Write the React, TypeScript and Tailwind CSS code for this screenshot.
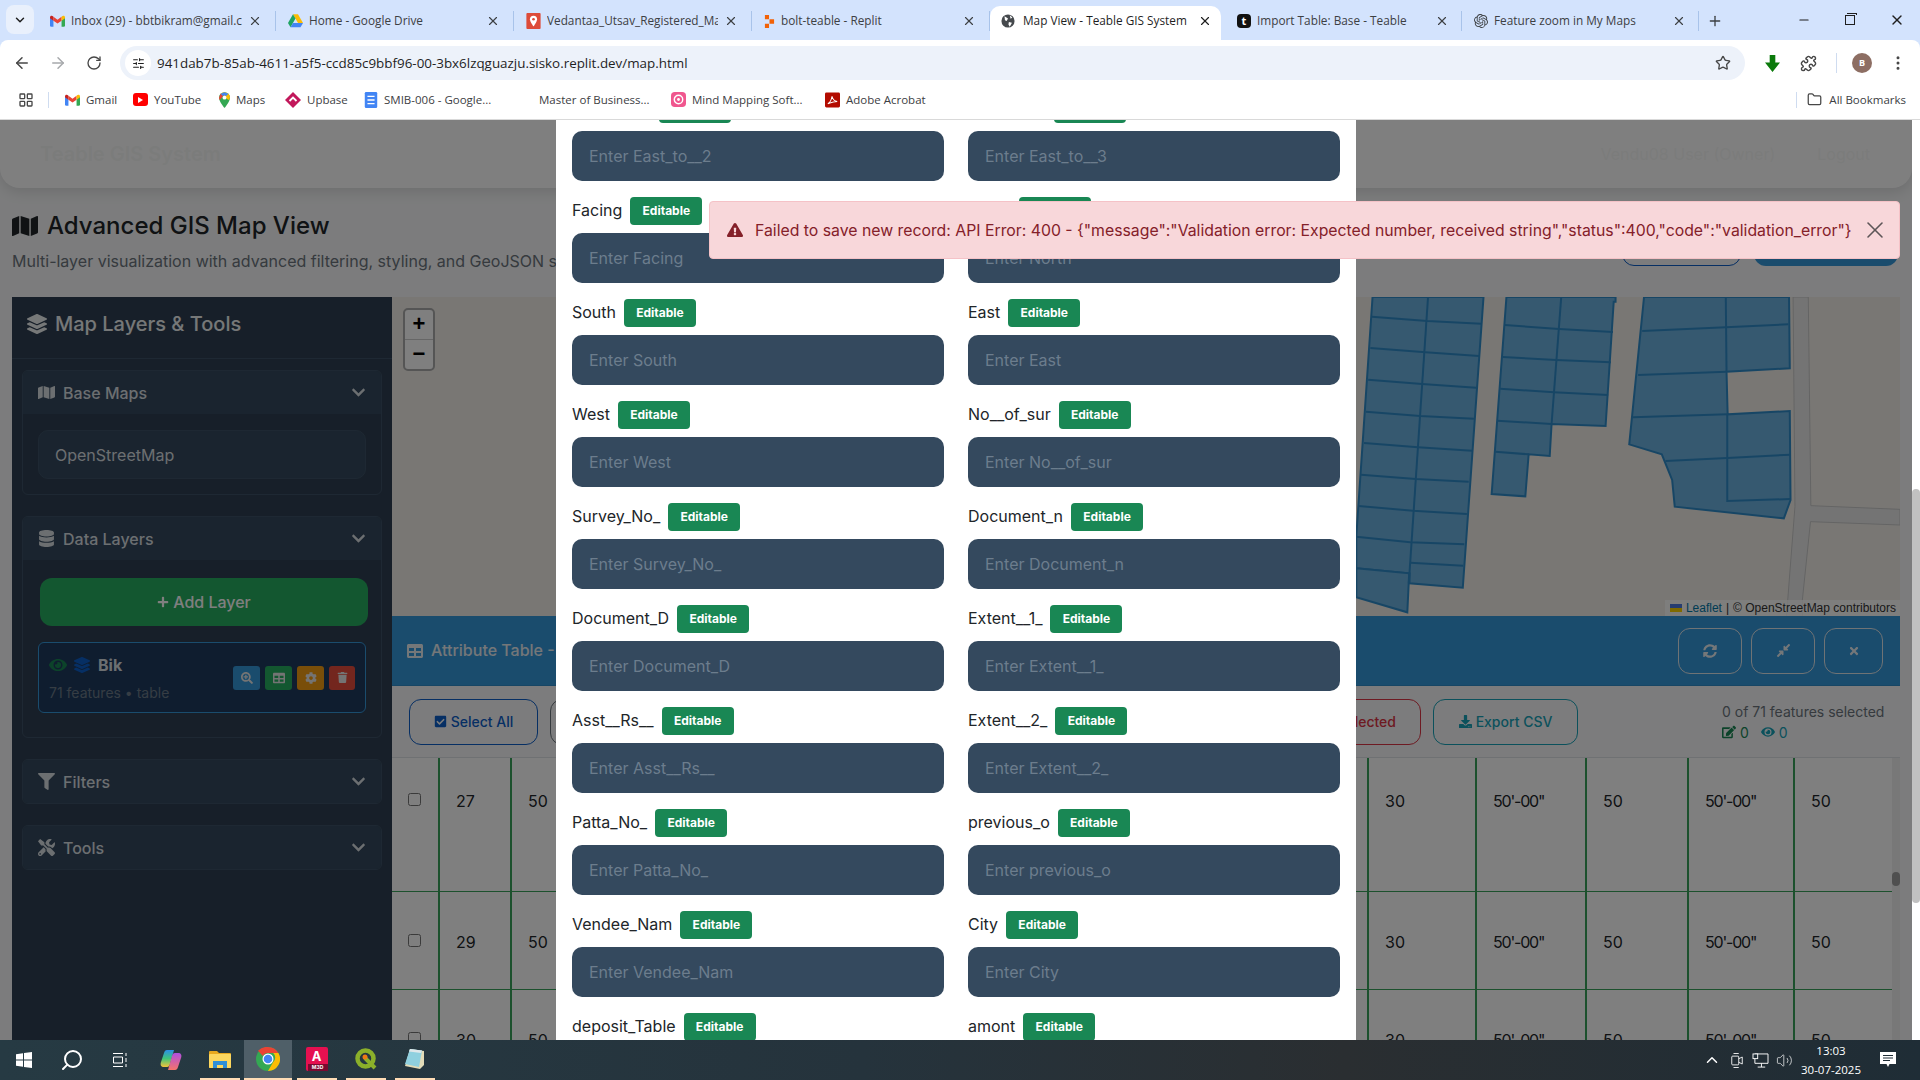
import { type ReactElement, type ReactNode } from 'react';
import {
  FaCheckSquare,
  FaChevronDown,
  FaCog,
  FaCompressAlt,
  FaDatabase,
  FaDownload,
  FaEdit,
  FaExclamationTriangle,
  FaEye,
  FaFilter,
  FaLayerGroup,
  FaMap,
  FaPlus,
  FaSearchPlus,
  FaSyncAlt,
  FaTable,
  FaTimes,
  FaTools,
  FaTrash,
} from 'react-icons/fa';
import { SiOpenai } from 'react-icons/si';
import {
  ArrowLeft,
  ArrowRight,
  ChevronDown,
  ChevronUp,
  EllipsisVertical,
  Folder,
  LayoutGrid,
  Minus,
  Plus,
  Puzzle,
  RotateCw,
  Search,
  SlidersHorizontal,
  Star,
  Volume2,
  X,
} from 'lucide-react';

function GmailIcon() {
  return (
    <svg viewBox="0 0 24 18" className="w-[15px] h-[12px] shrink-0">
      <path d="M0 3v13a2 2 0 0 0 2 2h3.500V8z" fill="#4285f4" />
      <path d="M24 3v13a2 2 0 0 1-2 2h-3.500V8z" fill="#34a853" />
      <path d="M5.500 2 12 7l6.500-5v6.500L12 13 5.500 8.500z" fill="#ea4335" />
      <path d="M0 3c0-2.500 3-3.500 5.500-1v6.500L0 4.500z" fill="#c5221f" />
      <path d="M24 3c0-2.500-3-3.500-5.500-1v6.500L24 4.500z" fill="#fbbc04" />
    </svg>
  );
}

function DriveIcon() {
  return (
    <svg viewBox="0 0 24 22" className="w-[15px] h-[14px] shrink-0">
      <path d="M8 0h8l8 14h-8z" fill="#fbbc04" />
      <path d="M8 0 0 14l4 7 8-14z" fill="#1fa463" />
      <path d="M8 14h16l-4 7H4z" fill="#4285f4" />
    </svg>
  );
}

function PinTile() {
  return (
    <svg viewBox="0 0 16 18" className="w-[15px] h-[16px] shrink-0">
      <rect width="16" height="18" rx="1" fill="#dd4b39" />
      <path d="M8 3a4 4 0 0 0-4 4c0 3 4 8 4 8s4-5 4-8a4 4 0 0 0-4-4z" fill="#fff" />
      <circle cx="8" cy="7" r="1.500" fill="#dd4b39" />
    </svg>
  );
}

function ReplitIcon() {
  return (
    <svg viewBox="0 0 12 16" className="w-[11px] h-[15px] shrink-0">
      <path d="M1 1h4.500v4.500H1zM6 5.500h5v5H6zM1 10.500h4.500V15H1z" fill="#f26207" />
    </svg>
  );
}

function GlobeIcon() {
  return (
    <svg viewBox="0 0 16 16" className="w-[14px] h-[14px] shrink-0">
      <circle cx="8" cy="8" r="7.500" fill="#45494d" />
      <path d="M4 2.500 8 5 6.500 8l-2-1zM9 9l3.500 1L10 14.500 8.500 12zM10 1.500l3 2.500-2 1.500z" fill="#fff" />
    </svg>
  );
}

function TeableIcon() {
  return (
    <span className="w-[14px] h-[14px] shrink-0 rounded-[4px] bg-[#111] text-white text-[11px] leading-[14px] font-bold text-center">
      t
    </span>
  );
}

function MapsPin() {
  return (
    <svg viewBox="0 0 14 20" className="w-[11px] h-[16px] shrink-0">
      <path d="M7 0a7 7 0 0 0-7 7c0 5 7 13 7 13s7-8 7-13a7 7 0 0 0-7-7z" fill="#34a853" />
      <path d="M7 0a7 7 0 0 0-5 2l10 8c1-1 2-2 2-3a7 7 0 0 0-7-7z" fill="#fbbc04" />
      <path d="M2 2 0 7c0 1 1 3 1 3l5-6z" fill="#ea4335" />
      <path d="M12 2 7 0 2 2l3 3c1-1 3-1 4 0z" fill="#4285f4" />
      <circle cx="7" cy="7" r="2.500" fill="#fff" />
    </svg>
  );
}

function UpbaseIcon() {
  return (
    <svg viewBox="0 0 16 16" className="w-[16px] h-[16px] shrink-0">
      <path d="M8 0 16 8l-8 8-8-8z" fill="#c2185b" />
      <path d="M4.500 9 8 5.500 11.500 9" stroke="#fff" strokeWidth="1.800" fill="none" />
    </svg>
  );
}

function DocsIcon() {
  return (
    <svg viewBox="0 0 14 18" className="w-[14px] h-[16px] shrink-0">
      <rect width="14" height="18" rx="1.500" fill="#4285f4" />
      <path d="M3 5h8M3 9h8M3 13h8" stroke="#fff" strokeWidth="1.500" />
    </svg>
  );
}

function MindIcon() {
  return (
    <svg viewBox="0 0 16 16" className="w-[15px] h-[15px] shrink-0">
      <rect width="16" height="16" rx="4" fill="#f0568e" />
      <circle cx="8" cy="8" r="4.500" fill="none" stroke="#fff" strokeWidth="1.500" />
      <circle cx="8" cy="8" r="1.500" fill="#fff" />
    </svg>
  );
}

function AdobeIcon() {
  return (
    <svg viewBox="0 0 16 16" className="w-[15px] h-[16px] shrink-0">
      <rect width="16" height="16" rx="1.500" fill="#b30b00" />
      <path d="M3 12c2-1 4-5 4.500-8 .5 3 2.500 5 5.500 5.500-3 0-6 1-10 2.500z" fill="none" stroke="#fff" strokeWidth="1.100" />
    </svg>
  );
}

function ChromeIcon() {
  return (
    <svg viewBox="0 0 24 24" className="w-[24px] h-[24px]">
      <circle cx="12" cy="12" r="12" fill="#34a853" />
      <path d="M12 0a12 12 0 0 1 10.400 6H12a6 6 0 0 0-5.200 3L2 3.800A12 12 0 0 1 12 0z" fill="#ea4335" />
      <path d="M22.400 6A12 12 0 0 1 12 24l5.200-9a6 6 0 0 0 0-9z" fill="#fbbc04" />
      <circle cx="12" cy="12" r="5.500" fill="#fff" />
      <circle cx="12" cy="12" r="4.300" fill="#4285f4" />
    </svg>
  );
}

function WindowsIcon() {
  return (
    <svg viewBox="0 0 16 16" className="w-[16px] h-[16px]">
      <path d="M0 2.300 7 1.300v6.300H0zM8 1.100 16 0v7.600H8zM0 8.500h7v6.300l-7-1zM8 8.500h8V16l-8-1.100z" fill="#fff" />
    </svg>
  );
}

function TaskViewIcon() {
  return (
    <svg viewBox="0 0 16 16" className="w-[16px] h-[16px]" fill="none" stroke="#fff" strokeWidth="1">
      <path d="M1 1.500h10M1 14.500h10M1.500 5h9v6h-9zM14 1v3M14 6v4M14 12v3" />
    </svg>
  );
}

function CopilotIcon() {
  return (
    <svg viewBox="0 0 22 22" className="w-[22px] h-[22px]">
      <defs>
        <linearGradient id="cop-a" x1="0" y1="0" x2="0" y2="1">
          <stop offset="0" stopColor="#2b8fe8" />
          <stop offset="0.5" stopColor="#3fc47a" />
          <stop offset="1" stopColor="#f5c23a" />
        </linearGradient>
        <linearGradient id="cop-b" x1="0" y1="0" x2="0" y2="1">
          <stop offset="0" stopColor="#b04fe0" />
          <stop offset="1" stopColor="#f5746a" />
        </linearGradient>
      </defs>
      <path d="M7 1h7l-4 14c-.5 2-1.500 3-3 3H4c-3 0-4-2-3-5l3-9c.5-2 1.500-3 3-3z" fill="url(#cop-a)" />
      <path d="M15 21H8l4-14c.5-2 1.500-3 3-3h3c3 0 4 2 3 5l-3 9c-.5 2-1.500 3-3 3z" fill="url(#cop-b)" />
    </svg>
  );
}

function ExplorerIcon() {
  return (
    <svg viewBox="0 0 22 18" className="w-[22px] h-[18px]">
      <path d="M0 2a1 1 0 0 1 1-1h7l2 2h11a1 1 0 0 1 1 1v13a1 1 0 0 1-1 1H1a1 1 0 0 1-1-1z" fill="#e8a91f" />
      <rect y="4" width="22" height="14" rx="1" fill="#fcd75f" />
      <path d="M4 11h14v7h-4v-3H8v3H4z" fill="#2f8fd8" />
    </svg>
  );
}

function AutocadIcon() {
  return (
    <div className="w-[22px] h-[24px] relative rounded-[2px] bg-[#e51050] text-white text-[13px] font-bold text-center leading-[18px]">
      A
      <div className="absolute left-[2px] right-0 bottom-0 h-[7px] bg-[#7a0a30] text-[5px] leading-[7px]">M3D</div>
    </div>
  );
}

function QgisIcon() {
  return (
    <svg viewBox="0 0 22 22" className="w-[22px] h-[22px]">
      <circle cx="10.500" cy="10.500" r="8" fill="none" stroke="#8bb02a" strokeWidth="4.500" />
      <path d="M10 10l10 10" stroke="#8bb02a" strokeWidth="4" />
      <circle cx="10" cy="9" r="2.500" fill="#ee7913" />
    </svg>
  );
}

function NotepadIcon() {
  return (
    <svg viewBox="0 0 22 22" className="w-[22px] h-[22px]">
      <path d="M6 1 20 3 20 17 16 21 1 18z" fill="#e3dcb8" />
      <path d="M6 1 18 2.500 15 19 1 16z" fill="#8fd0df" />
      <path d="M6 1 18 2.500 17 5 5 3.500z" fill="#dfe7ea" />
    </svg>
  );
}

const TABS: { icon: ReactElement; title: string }[] = [
  { icon: <GmailIcon />, title: 'Inbox (29) - bbtbikram@gmail.com - Gmail' },
  { icon: <DriveIcon />, title: 'Home - Google Drive' },
  { icon: <PinTile />, title: 'Vedantaa_Utsav_Registered_Map' },
  { icon: <ReplitIcon />, title: 'bolt-teable - Replit' },
];

function Tab({ icon, title }: { icon: ReactElement; title: string }) {
  return (
    <div className="w-[238px] h-[20px] flex items-center pl-[12px] pr-[13px] gap-[6px] border-r border-[#a8c3ea]">
      {icon}
      <span className="flex-1 text-[11.800px] text-[#3d4043] whitespace-nowrap overflow-hidden">{title}</span>
      <X size={14} className="text-[#3d4043] shrink-0" />
    </div>
  );
}

function TabStrip() {
  return (
    <div className="h-[40px] bg-[#d3e3fd] flex items-start pl-[6px] pt-[6px]">
      <div className="w-[28px] h-[29px] -mt-[1px] bg-[#e9f0fc] rounded-[8px] flex items-center justify-center">
        <ChevronDown size={14} className="text-[#1f1f1f]" strokeWidth={2.500} />
      </div>
      <div className="flex items-center h-[30px] ml-[4px]">
        {TABS.map((t) => (
          <Tab key={t.title} icon={t.icon} title={t.title} />
        ))}
      </div>
      <div className="w-[231px] h-[34px] pb-[4px] bg-white rounded-t-[10px] flex items-center pl-[11px] pr-[9px] gap-[8px]">
        <GlobeIcon />
        <span className="flex-1 text-[11.800px] text-[#1f1f1f] whitespace-nowrap overflow-hidden">Map View - Teable GIS System</span>
        <X size={14} className="text-[#1f1f1f]" />
      </div>
      <div className="w-[241px] h-[20px] mt-[5px] flex items-center pl-[16px] pr-[12px] gap-[6px] border-r border-[#a8c3ea]">
        <TeableIcon />
        <span className="flex-1 text-[11.800px] text-[#3d4043] whitespace-nowrap">Import Table: Base - Teable</span>
        <X size={14} className="text-[#3d4043]" />
      </div>
      <div className="w-[237px] h-[20px] mt-[5px] flex items-center pl-[12px] pr-[12px] gap-[6px] border-r border-[#a8c3ea]">
        <SiOpenai size={14} className="text-[#3d4043] shrink-0" />
        <span className="flex-1 text-[11.800px] text-[#3d4043] whitespace-nowrap">Feature zoom in My Maps</span>
        <X size={14} className="text-[#3d4043]" />
      </div>
      <Plus size={16} className="text-[#3d4043] ml-[8px] mt-[7px]" />
      <div className="ml-auto flex items-center h-[28px] pr-[15px] gap-[34px]">
        <Minus size={14} className="text-[#1f1f1f]" />
        <div className="w-[10px] h-[10px] border border-[#1f1f1f] relative before:content-[''] before:absolute before:-top-[3px] before:left-[1px] before:w-[10px] before:h-[2px] before:border-t before:border-r before:border-[#1f1f1f]" />
        <X size={16} className="text-[#1f1f1f]" />
      </div>
    </div>
  );
}

function AddressBar() {
  return (
    <div className="h-[40px] bg-white rounded-t-[8px] flex items-center pl-[13px] pt-[6px]">
      <ArrowLeft size={18} className="text-[#474747]" />
      <ArrowRight size={18} className="text-[#a7a9ac] ml-[18px]" />
      <RotateCw size={16} className="text-[#474747] ml-[19px]" />
      <div className="ml-[18px] w-[1625px] h-[34px] rounded-full bg-[#edf2fa] flex items-center pl-[5px] pr-[14px]">
        <div className="w-[26px] h-[26px] rounded-full bg-white flex items-center justify-center">
          <SlidersHorizontal size={13} className="text-[#1f1f1f]" />
        </div>
        <span className="ml-[6px] text-[13.400px] text-[#1f1f1f] font-['Open_Sans',sans-serif] flex-1">
          941dab7b-85ab-4611-a5f5-ccd85c9bbf96-00-3bx6lzqguazju.sisko.replit.dev/map.html
        </span>
        <Star size={16} className="text-[#474747]" />
      </div>
      <svg viewBox="0 0 16 18" className="w-[15px] h-[17px] ml-[20px]">
        <path d="M5 0h6v8h5l-8 10L0 8h5z" fill="#0b7a0b" />
      </svg>
      <Puzzle size={17} className="text-[#474747] ml-[20px]" />
      <div className="w-px h-[20px] bg-[#cfdcf0] ml-[19px]" />
      <div className="w-[20px] h-[20px] rounded-full bg-[#8d6e63] text-white text-[9px] font-bold flex items-center justify-center ml-[15px]">
        B
      </div>
      <EllipsisVertical size={18} className="text-[#474747] ml-[17px]" />
    </div>
  );
}

const BOOKMARKS: { icon?: ReactElement; label: string; width: string }[] = [
  { icon: <GmailIcon />, label: 'Gmail', width: 'w-[68px]' },
  {
    icon: (
      <span className="w-[15px] h-[13px] shrink-0 rounded-[3px] bg-[#f00] flex items-center justify-center">
        <span className="border-l-[5px] border-l-white border-y-[3px] border-y-transparent" />
      </span>
    ),
    label: 'YouTube',
    width: 'w-[86px]',
  },
  { icon: <MapsPin />, label: 'Maps', width: 'w-[66px]' },
  { icon: <UpbaseIcon />, label: 'Upbase', width: 'w-[79px]' },
  { icon: <DocsIcon />, label: 'SMIB-006 - Google...', width: 'w-[175px]' },
  { label: 'Master of Business...', width: 'w-[132px]' },
  { icon: <MindIcon />, label: 'Mind Mapping Soft...', width: 'w-[154px]' },
  { icon: <AdobeIcon />, label: 'Adobe Acrobat', width: 'w-[110px]' },
];

function BookmarksBar() {
  return (
    <div className="h-[40px] bg-white border-b border-[#d9d9d9] flex items-center pl-[18px] pr-[14px]">
      <LayoutGrid size={16} className="text-[#474747]" />
      <div className="w-px h-[16px] bg-[#cfdcf0] ml-[14px] mr-[16px]" />
      {BOOKMARKS.map((b) => (
        <div key={b.label} className={`${b.width} flex items-center gap-[6px] text-[11.500px] text-[#3d4043] whitespace-nowrap`}>
          {b.icon}
          {b.label}
        </div>
      ))}
      <div className="ml-auto flex items-center">
        <div className="w-px h-[16px] bg-[#cfdcf0] mr-[10px]" />
        <Folder size={15} className="text-[#474747]" />
        <span className="ml-[7px] text-[11.500px] text-[#3d4043]">All Bookmarks</span>
      </div>
    </div>
  );
}

function Accordion({ icon, title, children }: { icon: ReactNode; title: string; children?: ReactNode }) {
  return (
    <div className="border border-[#3d5166] rounded-[6px] overflow-hidden">
      <div className="h-[43px] bg-[#34495e] flex items-center pl-[15px] pr-[15px] text-[#d9dee2] text-[16px] font-medium">
        <span className="text-[#d9dee2] mr-[8px] text-[17px]">{icon}</span>
        {title}
        <FaChevronDown size={15} className="ml-auto text-[#d9dee2]" />
      </div>
      {children}
    </div>
  );
}

function LayerAction({ className, children }: { className: string; children: ReactNode }) {
  return (
    <div className={`h-[24px] rounded-[3px] flex items-center justify-center text-[#e8e8e8] text-[12px] ${className}`}>
      {children}
    </div>
  );
}

function Sidebar() {
  return (
    <aside className="w-[380px] shrink-0 bg-[#2f3f52]">
      <div className="h-[62px] pb-[8px] border-b border-[#3d5166] flex items-center pl-[15px] text-[20px] font-medium text-[#ecf0f1]">
        <FaLayerGroup size={20} className="mr-[8px]" />
        Map Layers &amp; Tools
      </div>
      <div className="px-[10px] pt-[11px] flex flex-col gap-[21px]">
        <Accordion icon={<FaMap />} title="Base Maps">
          <div className="px-[15px] pt-[16px] pb-[15px]">
            <div className="h-[49px] rounded-[10px] bg-[#34495e] border border-[#3d5166] flex items-center pl-[16px] text-[16px] text-[#d9dee2]">
              OpenStreetMap
            </div>
          </div>
        </Accordion>
        <Accordion icon={<FaDatabase />} title="Data Layers">
          <div className="px-[15px] pt-[18px] pb-[24px]">
            <div className="ml-[2px] -mr-[2px] h-[48px] rounded-[12px] bg-[#27ae60] flex items-center justify-center text-white text-[16px] font-medium">
              <FaPlus size={12} className="mr-[4px]" />
              Add Layer
            </div>
            <div className="mt-[16px] h-[71px] rounded-[6px] border border-[#3498db] bg-[#1e3a5f] flex items-center pl-[10px] pr-[10px]">
              <div className="flex-1">
                <div className="flex items-center gap-[7px] text-[16px] font-bold text-[#d9dee2]">
                  <FaEye size={18} className="text-[#198754]" />
                  <FaLayerGroup size={16} className="text-[#0d5ec9]" />
                  <span className="ml-[1px]">Bik</span>
                </div>
                <div className="text-[14px] text-[#6c7a89] mt-[5px]">71 features • table</div>
              </div>
              <div className="flex gap-[5px]">
                <LayerAction className="w-[27px] bg-[#3498db]">
                  <FaSearchPlus size={12} />
                </LayerAction>
                <LayerAction className="w-[27px] bg-[#27ae60]">
                  <FaTable size={12} />
                </LayerAction>
                <LayerAction className="w-[27px] bg-[#f39c12]">
                  <FaCog size={12} />
                </LayerAction>
                <LayerAction className="w-[26px] bg-[#e74c3c]">
                  <FaTrash size={11} />
                </LayerAction>
              </div>
            </div>
          </div>
        </Accordion>
        <Accordion icon={<FaFilter />} title="Filters" />
        <Accordion icon={<FaTools />} title="Tools" />
      </div>
    </aside>
  );
}

function LeafletMap() {
  return (
    <div className="h-[319px] relative bg-[#f2efe9] overflow-hidden">
      <div className="absolute left-[11px] top-[11px] w-[32px] border-2 border-[#aaa] rounded-[5px] bg-white text-[22px] font-bold text-black text-center font-['Liberation_Sans',sans-serif]">
        <div className="h-[30px] leading-[28px] border-b border-[#ccc]">+</div>
        <div className="h-[29px] leading-[27px]">−</div>
      </div>
      <svg
        viewBox="0 531 1514 957"
        preserveAspectRatio="none"
        className="absolute right-0 top-0 w-[560px] h-[319px]"
      >
        <path
          d="M1225 531h41l7 626 241 11v47l-242-10-22 235v50h-43l23-330z"
          fill="#e9e9e9"
          stroke="#c9c9c9"
          vectorEffect="non-scaling-stroke"
        />
        <g fill="#6cb2e0" stroke="#2f8ccb" strokeWidth="2">
          <path vectorEffect="non-scaling-stroke" d="M88 531h300l-56 872-144-13v-30l-144-15V1250z" />
          <path vectorEffect="non-scaling-stroke" d="M44 1345l143 15-5 117-138-45z" />
          <path vectorEffect="non-scaling-stroke" d="M450 531h295v14h-5l-22 373-146-6-5 96-57-5-9 126-91-7z" />
          <path vectorEffect="non-scaling-stroke" d="M822 531h392l2 214-171 10 3 128 168-10 2 267-18 55-295-35-7-80-28-77-88-30z" />
        </g>
        <g fill="none" stroke="#2f8ccb" strokeWidth="2">
          {[
            'M238 531 186 1390',
            'M86 590 236 603 382 611',
            'M82 684 231 697 376 708',
            'M76 779 222 792 368 803',
            'M70 875 217 888 362 896',
            'M65 969 211 982 357 992',
            'M57 1064 205 1077 348 1085',
            'M50 1158 197 1172 343 1182',
            'M44 1250 190 1267 336 1273',
            'M190 1328 333 1337',
            'M598 533 572 912',
            'M445 615 592 627 738 636',
            'M440 711 585 720 732 727',
            'M433 806 578 817 725 825',
            'M425 902 572 912',
            'M420 995 510 1003',
            'M817 633 1043 622 1212 613',
            'M1043 531 1045 755',
            'M806 765 1045 755',
            'M792 892 1048 883',
            'M1047 883V1143L1218 1137',
            'M880 1023 1047 1014 1217 1004',
          ].map((d) => (
            <path key={d} d={d} vectorEffect="non-scaling-stroke" />
          ))}
        </g>
      </svg>
      <div className="absolute right-0 bottom-0 h-[16px] bg-white/80 pl-[5px] pr-[4px] flex items-center text-[12px] text-[#333] font-['Liberation_Sans',sans-serif]">
        <span className="inline-flex flex-col w-[12px] h-[8px] mr-[4px]">
          <span className="h-[4px] bg-[#4c7be1]" />
          <span className="h-[4px] bg-[#ffd500]" />
        </span>
        <span className="text-[#0078a8]">Leaflet</span>
        <span className="mx-[4px]">|</span>© OpenStreetMap contributors
      </div>
    </div>
  );
}

const COLUMNS = ['w-[72px]', 'w-[857px]', 'w-[108px]', 'w-[110px]', 'w-[102px]', 'w-[106px]', 'w-[99px]'];

function TableRow({ height, top, boxTop, id }: { height: string; top: string; boxTop: string; id: string }) {
  const values = [id, '50', '30', `50'-00"`, '50', `50'-00"`, '50'];
  return (
    <div className={`flex border-b border-[#38a35a] ${height}`}>
      <div className={`w-[46px] pl-[16px] ${boxTop}`}>
        <input type="checkbox" readOnly className="block" />
      </div>
      {values.map((v, i) => (
        <div
          key={i}
          className={`${COLUMNS[i]} border-l-2 border-[#38a35a] pl-[16px] ${top} text-[16px] leading-[24px] text-[#212529] ${v.length > 2 ? 'tracking-[-1.200px]' : ''}`}
        >
          {v}
        </div>
      ))}
    </div>
  );
}

function AttributeTable() {
  return (
    <div className="flex-1 bg-white min-h-0 overflow-hidden">
      <div className="h-[70px] bg-[#3498db] border-b border-[#2f8ccb] flex items-center pl-[15px] pr-[17px] text-[#e8eef2]">
        <FaTable size={16} className="mr-[8px]" />
        <span className="text-[16px] font-medium mb-[2px]">Attribute Table - Bik</span>
        <div className="ml-auto flex gap-[9px]">
          <div className="w-[64px] h-[46px] border border-[#dfe6ea] rounded-[12px] flex items-center justify-center">
            <FaSyncAlt size={14} />
          </div>
          <div className="w-[64px] h-[46px] border border-[#dfe6ea] rounded-[12px] flex items-center justify-center">
            <FaCompressAlt size={15} />
          </div>
          <div className="w-[59px] h-[46px] border border-[#dfe6ea] rounded-[12px] flex items-center justify-center">
            <FaTimes size={12} />
          </div>
        </div>
      </div>
      <div className="h-[72px] bg-[#f8f9fa] border-b border-[#dee2e6] flex items-center pl-[17px] pr-[15px] text-[14px] font-medium">
        <div className="w-[129px] h-[46px] border border-[#0d5ec9] text-[#0d5ec9] rounded-[12px] flex items-center justify-center">
          <FaCheckSquare size={13} className="mr-[4px]" />
          Select All
        </div>
        <div className="ml-[12px] w-[130px] h-[46px] border border-[#6c757d] rounded-[12px]" />
        <div className="ml-[590px] w-[151px] h-[46px] border border-[#dc3545] text-[#dc3545] rounded-[12px] flex items-center justify-end pr-[24px]">
          Delete Selected
        </div>
        <div className="ml-[12px] w-[145px] h-[46px] border border-[#17a2b8] text-[#17a2b8] rounded-[12px] flex items-center justify-center">
          <FaDownload size={13} className="mr-[4px]" />
          Export CSV
        </div>
        <div className="ml-auto w-[163px] font-normal text-[#6c757d] leading-[21px]">
          <div className="whitespace-nowrap">0 of 71 features selected</div>
          <div className="flex items-center">
            <span className="flex items-center text-[#198754]">
              <FaEdit size={14} className="mr-[4px]" />0
            </span>
            <span className="flex items-center text-[#17a2b8] ml-[12px]">
              <FaEye size={14} className="mr-[4px]" />0
            </span>
          </div>
        </div>
      </div>
      <div className="relative">
        <TableRow id="27" height="h-[134px]" top="pt-[31px]" boxTop="pt-[35px]" />
        <TableRow id="29" height="h-[98px]" top="pt-[38px]" boxTop="pt-[42px]" />
        <TableRow id="30" height="h-[98px]" top="pt-[38px]" boxTop="pt-[42px]" />
        <div className="absolute right-0 top-0 bottom-0 w-[8px] bg-[#f1f1f1]">
          <div className="mt-[114px] h-[14px] rounded-full bg-[#9e9e9e]" />
        </div>
      </div>
    </div>
  );
}

function PageBehind() {
  return (
    <div className="h-full w-[1912px] bg-[#f8f9fa]">
      <header className="h-[68px] bg-white rounded-b-[20px] shadow-[0_4px_14px_rgba(0,0,0,0.12)] flex items-center pl-[12px] pr-[42px] text-[#f7f8f7]">
        <span className="text-[20px] font-semibold pl-[28px]">Teable GIS System</span>
        <span className="ml-auto text-[16px]">Vendu08 User (Owner)</span>
        <span className="ml-[42px] text-[16px]">Logout</span>
      </header>
      <div className="px-[12px]">
        <div className="h-[109px] flex justify-between">
          <div className="pt-[22px]">
            <div className="flex items-center h-[32px] text-[24px] font-medium text-[#212529]">
              <FaMap size={26} className="mr-[9px]" />
              Advanced GIS Map View
            </div>
            <div className="mt-[7px] text-[16px] leading-[24px] text-[#6c757d]">
              Multi-layer visualization with advanced filtering, styling, and GeoJSON support
            </div>
          </div>
          <div className="pt-[32px] flex gap-[13px] pr-[2px]">
            <div className="w-[119px] h-[46px] border border-[#0d5ec9] rounded-[12px]" />
            <div className="w-[144px] h-[46px] bg-[#3498db] rounded-[12px]" />
          </div>
        </div>
        <div className="flex h-[743px]">
          <Sidebar />
          <div className="flex-1 min-w-0 flex flex-col">
            <LeafletMap />
            <AttributeTable />
          </div>
        </div>
      </div>
    </div>
  );
}

const FIELDS: [string, string][] = [
  ['East_to__2', 'East_to__3'],
  ['Facing', 'North'],
  ['South', 'East'],
  ['West', 'No__of_sur'],
  ['Survey_No_', 'Document_n'],
  ['Document_D', 'Extent__1_'],
  ['Asst__Rs__', 'Extent__2_'],
  ['Patta_No_', 'previous_o'],
  ['Vendee_Nam', 'City'],
  ['deposit_Table', 'amont'],
];

function Field({ name }: { name: string }) {
  return (
    <div>
      <div className="flex items-center gap-[8px] h-[28px] mb-[8px] text-[16px] text-[#212529]">
        <span className="mb-[3px]">{name}</span>
        <span className="h-[28px] w-[72px] justify-center rounded-[4px] bg-[#198754] text-white text-[12px] font-bold flex items-center">
          Editable
        </span>
      </div>
      <input
        readOnly
        placeholder={`Enter ${name}`}
        className="w-full h-[50px] rounded-[10px] bg-[#34495e] pl-[17px] text-[16px] outline-none placeholder:text-[#6c7d8d]"
      />
    </div>
  );
}

function RecordModal() {
  return (
    <div className="absolute left-[556px] top-0 bottom-0 w-[800px] bg-white overflow-hidden px-[16px]">
      <div className="grid grid-cols-2 gap-x-[24px] gap-y-[16px] -mt-[25px]">
        {FIELDS.flat().map((name) => (
          <Field key={name} name={name} />
        ))}
      </div>
    </div>
  );
}

function ErrorToast() {
  return (
    <div className="absolute left-[709px] top-[81px] w-[1191px] h-[58px] bg-[#f8d7da] border border-[#f5c2c7] rounded-[4px] flex items-center pl-[17px] text-[#842029] text-[15.800px]">
      <FaExclamationTriangle size={16} className="mr-[12px] shrink-0" />
      <span className="whitespace-nowrap mt-[1px]">
        Failed to save new record: API Error: 400 - {'{"message":"Validation error: Expected number, received string","status":400,"code":"validation_error"}'}
      </span>
      <X size={28} className="absolute right-[10px] top-[14px] text-[#5d5557]" strokeWidth={1.300} />
    </div>
  );
}

function TaskbarApp({ children }: { children: ReactNode }) {
  return (
    <div className="w-[49px] h-full flex justify-center">
      <div className="w-[40px] h-full flex items-center justify-center border-b-2 border-[#ffdcb5]">{children}</div>
    </div>
  );
}

function Taskbar() {
  return (
    <div className="h-[40px] bg-[linear-gradient(90deg,#263a43,#25333c_45%,#2a2e31_70%,#1f2d36)] flex items-center">
      <div className="w-[48px] flex justify-center"><WindowsIcon /></div>
      <div className="w-[48px] flex justify-center"><Search size={24} className="text-white -scale-x-100" strokeWidth={2} /></div>
      <div className="w-[48px] flex justify-center"><TaskViewIcon /></div>
      <div className="w-[48px] ml-[3px] flex justify-center"><CopilotIcon /></div>
      <TaskbarApp><ExplorerIcon /></TaskbarApp>
      <div className="w-[48px] h-full bg-[#4f5f68] flex items-center justify-center border-b-2 border-[#ffdcb5]"><ChromeIcon /></div>
      <TaskbarApp><AutocadIcon /></TaskbarApp>
      <TaskbarApp><QgisIcon /></TaskbarApp>
      <TaskbarApp><NotepadIcon /></TaskbarApp>
      <div className="ml-auto flex items-center text-white pr-[24px]">
        <ChevronUp size={18} />
        <svg viewBox="0 0 16 18" className="w-[14px] h-[17px] ml-[9px]" fill="none" stroke="#fff"><rect x="2" y="4" width="8" height="10" rx="1" /><path d="M10 7l4-2v8l-4-2M4 1h6M4 17h6" /></svg>
        <svg viewBox="0 0 18 16" className="w-[17px] h-[15px] ml-[8px]" fill="none" stroke="#fff"><path d="M3 1h14v10H3zM10 11v4M6 15h8" /><rect x="1" y="1" width="5" height="5" fill="#1f2d36" /></svg>
        <Volume2 size={17} className="ml-[7px]" strokeWidth={1} />
        <div className="w-[68px] ml-[4px] text-center text-[11.500px] leading-[19px] font-['Open_Sans',sans-serif]">
          <div>13:03</div>
          <div>30-07-2025</div>
        </div>
        <svg viewBox="0 0 16 16" className="w-[16px] h-[16px] ml-[15px]"><path d="M0 0h16v12H9.500L8 15l-1.500-3H0z" fill="#fff" /><path d="M3 3.500h10M3 6h10M3 8.500h7" stroke="#1f2d36" /></svg>
      </div>
    </div>
  );
}

export default function App(): ReactElement {
  return (
    <div className="w-[1920px] h-[1080px] flex flex-col overflow-hidden font-['Inter',sans-serif]">
      <div className="font-['Open_Sans',sans-serif] bg-[#d3e3fd]">
        <TabStrip />
        <AddressBar />
        <BookmarksBar />
      </div>
      <main className="relative flex-1 min-h-0 overflow-hidden bg-[#fdfdfd]">
        <PageBehind />
        <div className="absolute left-0 top-0 bottom-0 w-[1912px] bg-black/50" />
        <div className="absolute right-0 top-0 bottom-0 w-[8px] bg-white">
          <div className="mt-[369px] h-[414px] rounded-full bg-[#c1c1c1]" />
        </div>
        <RecordModal />
        <ErrorToast />
      </main>
      <Taskbar />
    </div>
  );
}
